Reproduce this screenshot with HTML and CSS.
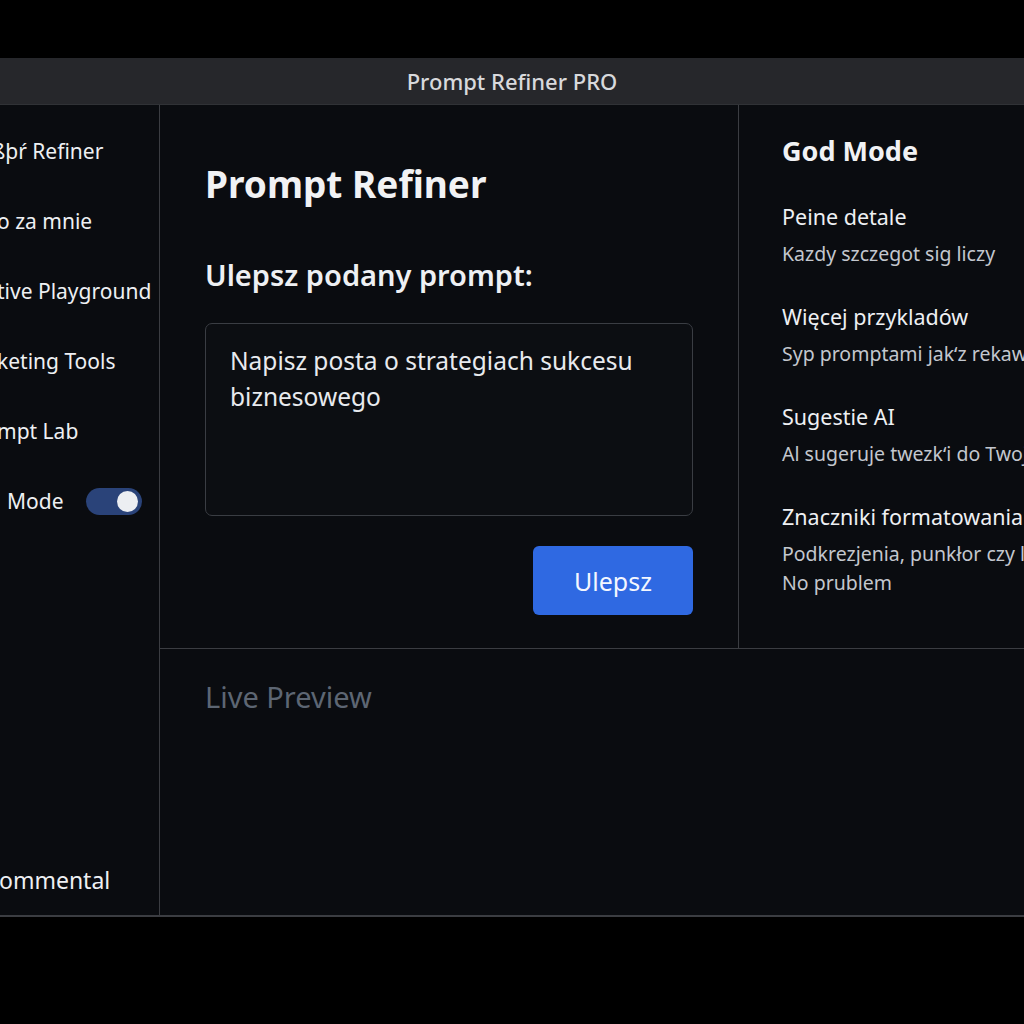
FILE: index.html
```html
<!DOCTYPE html>
<html lang="pl">
<head>
<meta charset="utf-8">
<title>Prompt Refiner PRO</title>
<link rel="stylesheet" href="styles.css">
</head>
<body>
<div class="topgap"></div>
<header class="titlebar">Prompt Refiner PRO</header>
<div class="app">
  <nav class="sidebar">
    <div class="nav-item first">ßþŕ Refiner</div>
    <div class="nav-item">o za mnie</div>
    <div class="nav-item">tive Playground</div>
    <div class="nav-item">keting Tools</div>
    <div class="nav-item">mpt Lab</div>
    <div class="nav-item toggle-row"><span class="mode-label">Mode</span><span class="toggle"><span class="knob"></span></span></div>
    <div class="nav-item bottom">ommental</div>
  </nav>
  <div class="content">
    <div class="upper">
      <main class="editor">
        <h1 class="title">Prompt Refiner</h1>
        <h2 class="subtitle">Ulepsz podany prompt:</h2>
        <div class="textbox">Napisz posta o strategiach sukcesu biznesowego</div>
        <div class="actions"><button class="btn">Ulepsz</button></div>
      </main>
      <aside class="godmode">
        <h3 class="gm-title">God Mode</h3>
        <div class="feature">
          <div class="f-name">Peine detale</div>
          <div class="f-desc">Kazdy szczegot sig liczy</div>
        </div>
        <div class="feature">
          <div class="f-name">Więcej przykladów</div>
          <div class="f-desc">Syp promptami jak‘z rekawa</div>
        </div>
        <div class="feature">
          <div class="f-name">Sugestie AI</div>
          <div class="f-desc">Al sugeruje twezk‘i do Twojego</div>
        </div>
        <div class="feature">
          <div class="f-name">Znaczniki formatowania</div>
          <div class="f-desc">Podkrezjenia, punkłor czy listy<br>No prublem</div>
        </div>
      </aside>
    </div>
    <section class="preview">
      <div class="preview-title">Live Preview</div>
    </section>
  </div>
</div>
</body>
</html>
```
FILE: styles.css
```css
* { box-sizing: border-box; }
html, body { margin: 0; padding: 0; }
body {
  background: #000;
  width: 1024px;
  height: 1024px;
  overflow: hidden;
  font-family: "Noto Sans", "Open Sans", sans-serif;
  color: #eef0f3;
}
.topgap { height: 58px; background: #000; }
.titlebar {
  height: 47px;
  background: #26272b;
  color: #d8d9dc;
  font-size: 22px;
  font-weight: 500;
  display: flex;
  align-items: center;
  justify-content: center;
  border-bottom: 1px solid #303236;
}
.app {
  display: flex;
  height: 812px;
  background: #0a0c10;
  border-bottom: 2px solid #3b3d42;
}
.sidebar {
  width: 160px;
  flex: none;
  border-right: 1px solid #3b3d42;
  display: flex;
  flex-direction: column;
  padding-top: 11px;
  overflow: hidden;
}
.nav-item {
  height: 70px;
  display: flex;
  align-items: center;
  font-size: 21px;
  color: #eef0f3;
  white-space: nowrap;
  margin-left: -3px;
}
.nav-item.first { margin-left: -8px; }
.nav-item.bottom { margin-top: auto; font-size: 23px; margin-left: -1px; }
.mode-label { margin-left: 10px; width: 79px; }
.toggle {
  width: 56px;
  height: 27px;
  border-radius: 14px;
  background: #2a4379;
  position: relative;
  display: inline-block;
}
.knob {
  position: absolute;
  top: 3px;
  right: 4px;
  width: 21px;
  height: 21px;
  border-radius: 50%;
  background: #eceef2;
}
.content {
  flex: 1;
  display: flex;
  flex-direction: column;
}
.upper {
  height: 544px;
  display: flex;
  border-bottom: 1px solid #3b3d42;
}
.editor {
  width: 579px;
  flex: none;
  border-right: 1px solid #3b3d42;
  padding: 55px 46px 0 45px;
}
.title {
  margin: 0;
  font-size: 37px;
  font-weight: 700;
  line-height: 48px;
  color: #f1f2f4;
}
.subtitle {
  margin: 48px 0 0;
  font-size: 29px;
  font-weight: 600;
  line-height: 38px;
  color: #eef0f3;
}
.textbox {
  margin-top: 29px;
  height: 193px;
  border: 1px solid #3a3d43;
  border-radius: 7px;
  background: #0c0e12;
  padding: 19px 24px;
  font-size: 24.5px;
  line-height: 36px;
  color: #e8eaee;
  width: 488px;
}
.actions {
  display: flex;
  justify-content: flex-end;
  margin-top: 30px;
  width: 488px;
}
.btn {
  width: 160px;
  height: 69px;
  border: none;
  border-radius: 6px;
  background: #2f69e2;
  color: #f4f7ff;
  font-family: "Noto Sans", "Open Sans", sans-serif;
  font-size: 25px;
}
.godmode {
  flex: 1;
  padding: 29px 0 0 43px;
  white-space: nowrap;
  overflow: hidden;
}
.gm-title {
  margin: 0;
  font-size: 27px;
  font-weight: 700;
  line-height: 34px;
  color: #f1f2f4;
}
.gm-title + .feature { margin-top: 32px; }
.feature + .feature { margin-top: 32px; }
.f-name {
  font-size: 21.5px;
  line-height: 34px;
  color: #eef0f3;
}
.f-desc {
  font-size: 19.5px;
  line-height: 29px;
  color: #c3c7ce;
  margin-top: 5px;
}
.preview {
  flex: 1;
  padding: 27px 45px;
}
.preview-title {
  font-size: 29px;
  line-height: 42px;
  color: #5d6673;
}
```
